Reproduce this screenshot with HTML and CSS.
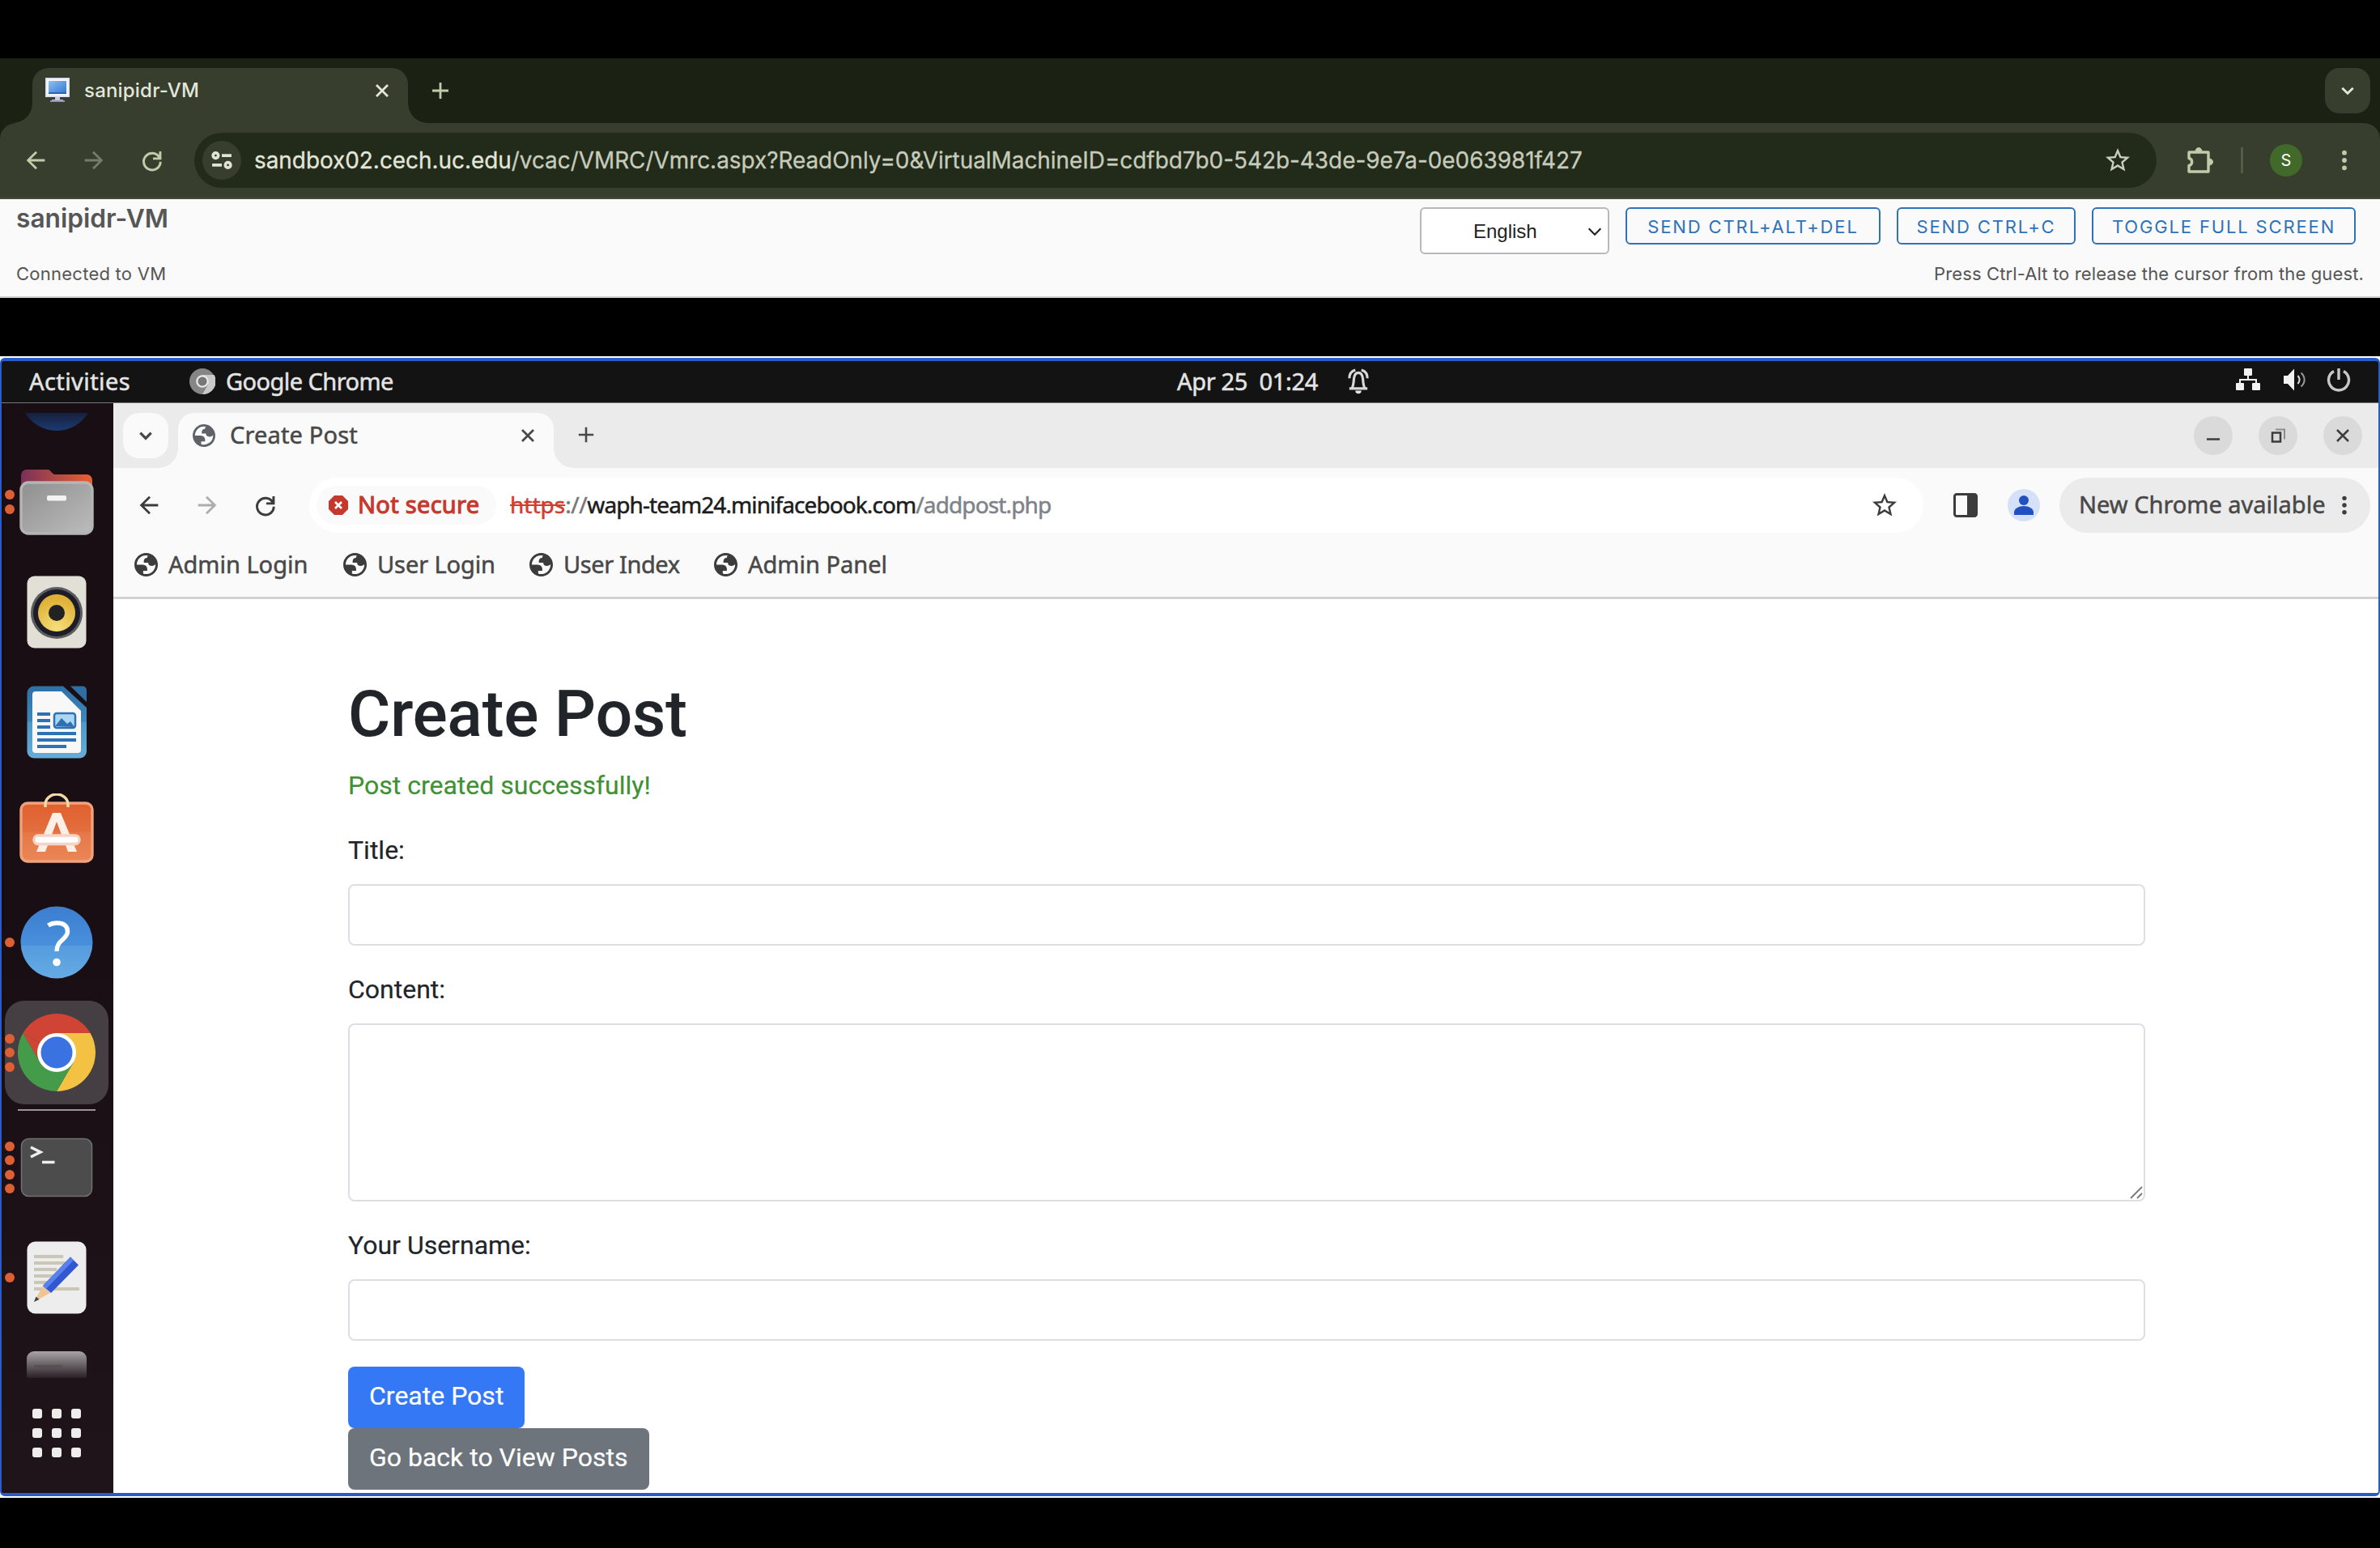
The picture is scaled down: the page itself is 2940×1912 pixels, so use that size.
FILE: index.html
```html
<!DOCTYPE html>
<html lang="en">
<head>
<meta charset="utf-8">
<title>sanipidr-VM</title>
<link rel="stylesheet" href="styles.css">
</head>
<body>
<svg class="defs" width="0" height="0">
  <symbol id="back" viewBox="0 0 24 24"><path d="M20 11H7.83l5.59-5.59L12 4l-8 8 8 8 1.41-1.41L7.83 13H20v-2z"/></symbol>
  <symbol id="forward" viewBox="0 0 24 24"><path d="M4 11h12.17l-5.59-5.59L12 4l8 8-8 8-1.41-1.41L16.17 13H4v-2z"/></symbol>
  <symbol id="reload" viewBox="0 0 24 24"><path d="M19 4.200v6.300h-6.300M18.400 9.800A7.300 7.300 0 1 0 19.200 13.200" fill="none" stroke="currentColor" stroke-width="2.100"/></symbol>
  <symbol id="close" viewBox="0 0 24 24"><path d="M5 5l14 14M19 5L5 19" fill="none" stroke="currentColor" stroke-width="2.800"/></symbol>
  <symbol id="plus" viewBox="0 0 24 24"><path d="M12 2v20M2 12h20" fill="none" stroke="currentColor" stroke-width="2.800"/></symbol>
  <symbol id="chevron" viewBox="0 0 24 24"><path d="M4 8l8 8 8-8" fill="none" stroke="currentColor"/></symbol>
  <symbol id="star" viewBox="0 0 24 24"><path d="M22 9.240l-7.190-.620L12 2 9.190 8.630 2 9.240l5.460 4.730L5.820 21 12 17.270 18.180 21l-1.630-7.030L22 9.240zM12 15.400l-3.760 2.270 1-4.280-3.320-2.880 4.380-.380L12 6.100l1.710 4.040 4.380.380-3.320 2.880 1 4.280L12 15.400z"/></symbol>
  <symbol id="dots" viewBox="0 0 24 24"><circle cx="12" cy="4" r="2.500"/><circle cx="12" cy="12" r="2.500"/><circle cx="12" cy="20" r="2.500"/></symbol>
  <symbol id="globe" viewBox="2 2 20 20"><path fill-rule="evenodd" d="M12 2c5.523 0 10 4.477 10 10s-4.477 10-10 10S2 17.523 2 12 6.477 2 12 2zM4 12h4.400c3.407.022 4.922 1.730 4.543 5.127H9.488v2.470a8.004 8.004 0 0 0 10.498-8.083C19.327 12.504 18.332 13 17 13c-2.137 0-3.206-.916-3.206-2.750h-3.748c-.274-2.728.683-4.092 2.870-4.092 0-.975.327-1.597.811-1.970A8.004 8.004 0 0 0 4 12z"/></symbol>
</svg>

<div class="browser">
<div class="tabstrip">
  <div class="tab">
    <svg class="favicon" viewBox="0 0 32 32"><defs><linearGradient id="scr" x1="0" y1="0" x2="1" y2="1"><stop offset="0" stop-color="#8fc0ee"/><stop offset="1" stop-color="#2f76d2"/></linearGradient></defs><rect x="1" y="0" width="30" height="24" fill="#d8dcea"/><rect x="2.500" y="1.500" width="27" height="21" fill="#f2f5fb"/><rect x="5" y="4" width="22" height="16" fill="url(#scr)"/><rect x="5" y="18" width="22" height="2" fill="#2c62c4"/><path d="M13 24h6v3h4v3H9v-3h4z" fill="#c9cbdc"/><rect x="7" y="28" width="18" height="2" fill="#8f90b4"/></svg>
    <span class="tab-title">sanipidr-VM</span>
    <svg class="tab-close"><use href="#close"/></svg>
  </div>
  <svg class="new-tab"><use href="#plus"/></svg>
  <div class="tab-search"><svg><use href="#chevron"/></svg></div>
</div>

<div class="toolbar">
  <svg class="nav"><use href="#back"/></svg>
  <svg class="nav dim"><use href="#forward"/></svg>
  <svg class="nav"><use href="#reload"/></svg>
  <div class="omnibox">
    <div class="site-info"><svg viewBox="0 0 24 24" fill="none" stroke="#e0e4d6" stroke-width="2.400"><circle cx="5" cy="6.500" r="3"/><path d="M12 6.500h11M1 17.500h11"/><circle cx="19" cy="17.500" r="3"/></svg></div>
    <div class="url"><span class="url-host">sandbox02.cech.uc.edu</span><span class="url-path">/vcac/VMRC/Vmrc.aspx?ReadOnly=0&amp;VirtualMachineID=cdfbd7b0-542b-43de-9e7a-0e063981f427</span></div>
    <svg class="bookmark-star"><use href="#star"/></svg>
  </div>
  <svg class="extensions" viewBox="0 0 34 34" fill="none" stroke="#c0cbaa" stroke-width="3.200" stroke-linejoin="round"><path d="M4 7h24v24H4v-7.500a4.600 4.600 0 0 0 0-9z"/><path d="M12 6a4 4.500 0 0 1 8 0zM29 15a4.500 4 0 0 1 0 8z" fill="#c0cbaa" stroke-width="1"/></svg>
  <div class="toolbar-sep"></div>
  <div class="avatar">S</div>
  <svg class="menu-dots"><use href="#dots"/></svg>
</div>
</div>

<div class="console-header">
  <div class="console-left">
    <div class="console-title">sanipidr-VM</div>
    <div class="console-status">Connected to VM</div>
  </div>
  <div class="console-right">
    <div class="console-actions">
      <div class="lang"><span>English</span><svg><use href="#chevron"/></svg></div>
      <div class="cbtn b1"><span>SEND CTRL+ALT+DEL</span></div>
      <div class="cbtn b2"><span>SEND CTRL+C</span></div>
      <div class="cbtn b3"><span>TOGGLE FULL SCREEN</span></div>
    </div>
    <div class="console-hint">Press Ctrl-Alt to release the cursor from the guest.</div>
  </div>
</div>

<div class="vm">
<div class="screen">
  <div class="topbar">
    <span class="activities">Activities</span>
    <svg class="app-icon" viewBox="0 0 32 32"><circle cx="16" cy="16" r="16" fill="#868686"/><path d="M16 8h14.500A16 16 0 0 1 16 32l7-12z" fill="#c9c9c9"/><circle cx="16" cy="16" r="7.800" fill="#e8e8e8"/><circle cx="16" cy="16" r="5.500" fill="#777"/></svg>
    <span class="app-name">Google Chrome</span>
    <span class="clock">Apr 25&nbsp; 01:24</span>
    <svg class="bell" viewBox="0 0 28 34" fill="none" stroke="#d8d8d8" stroke-width="2"><path d="M2 26.500h24M5.500 26c2-3 2-7 2.500-12 .5-5 2.500-8.500 6-8.500s5.500 3.500 6 8.500c.5 5 .5 9 2.500 12M2 13c0-5 2.500-9.500 8-11M26 13c0-5-2.500-9.500-8-11"/><path d="M10 29.500h8a4 4 0 0 1-8 0z" fill="#e6e6e6" stroke="none"/></svg>
    <div class="tray">
      <svg class="net" viewBox="0 0 32 28" fill="#f2f2f2"><rect x="11" y="0" width="10" height="9" rx="1"/><rect x="1" y="18" width="10" height="9" rx="1"/><rect x="21" y="18" width="10" height="9" rx="1"/><path d="M16 8v6M6 19v-5h20v5" fill="none" stroke="#f2f2f2" stroke-width="2"/></svg>
      <svg class="vol" viewBox="0 0 32 28"><path d="M1 9h5l8-8.500v27L6 19H1z" fill="#f2f2f2"/><path d="M18.500 9c2.500 3 2.500 7 0 10" stroke="#ddd" stroke-width="2" fill="none"/><path d="M22.500 5.500c5.500 5 5.500 12 0 17" stroke="#999" stroke-width="2" fill="none"/></svg>
      <svg class="power" viewBox="0 0 30 30" fill="none" stroke="#c8c8c8" stroke-width="2"><path d="M9 4.500A12.500 12.500 0 1 0 21 4.500M15 1v14"/></svg>
    </div>
  </div>

  <div class="desktop">
    <div class="dock">
      <div class="slot first"><svg viewBox="0 0 96 54"><defs><linearGradient id="tb" x1="0" y1="0" x2="0" y2="1"><stop offset="0" stop-color="#17203c"/><stop offset="1" stop-color="#1c3a72"/></linearGradient></defs><path d="M9 12C17 25 32 34 48 34s31-9 39-22z" fill="url(#tb)"/></svg></div>
      <div class="slot"><div class="pips"><i></i><i></i></div><svg viewBox="0 0 96 96"><defs><linearGradient id="fo" x1="0" y1="0" x2="1" y2="0"><stop offset="0" stop-color="#7b3058"/><stop offset=".5" stop-color="#b24a45"/><stop offset="1" stop-color="#e8622c"/></linearGradient><linearGradient id="fg" x1="0" y1="0" x2="1" y2="1"><stop offset="0" stop-color="#8f8f8f"/><stop offset="1" stop-color="#bcbcbc"/></linearGradient></defs><path d="M4 40V15a7 7 0 0 1 7-7h26c4 0 5 6 9 6h39a7 7 0 0 1 7 7v20z" fill="url(#fo)"/><rect x="4" y="24" width="88" height="63" rx="9" fill="url(#fg)" stroke="#b5b5b5"/><rect x="36" y="40" width="24" height="6.500" rx="2" fill="#f3f3f3"/></svg></div>
      <div class="slot"><svg viewBox="0 0 96 96"><defs><radialGradient id="ry" cx=".5" cy=".9" r=".8"><stop offset="0" stop-color="#f6de7a"/><stop offset="1" stop-color="#dfb135"/></radialGradient></defs><rect x="11.500" y="3.500" width="73" height="89" rx="9" fill="#e2dfd6"/><circle cx="48" cy="49" r="32" fill="#5c5c60"/><circle cx="48" cy="49" r="29" fill="#1d1d28"/><circle cx="48" cy="49" r="23" fill="url(#ry)"/><circle cx="48" cy="49" r="10" fill="#222"/></svg></div>
      <div class="slot"><svg viewBox="0 0 96 96"><defs><linearGradient id="wr" x1="0" y1="0" x2="0" y2="1"><stop offset="0" stop-color="#2e70a8"/><stop offset=".49" stop-color="#3d87bb"/><stop offset=".5" stop-color="#4d98c8"/><stop offset="1" stop-color="#66add8"/></linearGradient></defs><path d="M20 3.500h36L85 30v54a8.500 8.500 0 0 1-8.500 8.500H20A8.500 8.500 0 0 1 11.500 84V12A8.500 8.500 0 0 1 20 3.500z" fill="url(#wr)"/><path d="M65 3.500h15a5 5 0 0 1 5 5V23z" fill="#2f6ea4"/><path d="M22 10h32l24 24v48a4 4 0 0 1-4 4H22a4 4 0 0 1-4-4V14a4 4 0 0 1 4-4z" fill="#f8f8f8"/><path d="M24 38h16M24 46h16M24 54h16M24 62h48M24 70h48M24 78h36" stroke="#2f72b4" stroke-width="4"/><rect x="45" y="37" width="26" height="18" rx="3" fill="#acd6f2" stroke="#2f72b4" stroke-width="2.500"/><path d="M46 53l8-10 7 7 4-3 5 7z" fill="#2f72b4"/></svg></div>
      <div class="slot"><svg viewBox="0 0 96 96"><defs><linearGradient id="so" x1="0" y1="0" x2="0" y2="1"><stop offset="0" stop-color="#e0602f"/><stop offset=".49" stop-color="#e36e3e"/><stop offset=".5" stop-color="#e67848"/><stop offset="1" stop-color="#ea8656"/></linearGradient></defs><rect x="4" y="12" width="88" height="72" rx="8" fill="url(#so)" stroke="#f0a27c"/><path d="M34 17v-3a14 13 0 0 1 28 0v3" fill="none" stroke="#f2dba8" stroke-width="3.500"/><path d="M23 72L43 24h10l20 48H62L48 35 34 72z" fill="#fbefe8"/><rect x="20" y="52" width="56" height="10.500" rx="5" fill="#fff" stroke="#f5d3c5"/></svg></div>
      <div class="slot"><div class="pips"><i></i></div><svg viewBox="0 0 96 96"><defs><linearGradient id="he" x1="0" y1="0" x2="0" y2="1"><stop offset="0" stop-color="#3c7dd0"/><stop offset=".54" stop-color="#4890dc"/><stop offset=".55" stop-color="#569cde"/><stop offset="1" stop-color="#64abe4"/></linearGradient></defs><circle cx="48" cy="48" r="44.500" fill="url(#he)"/><path d="M37.500 27c4-2.500 8-3 11-3 8 0 13 3.500 13 10.500 0 10-13.500 10-13.500 24.500" fill="none" stroke="#fff" stroke-width="5.500"/><circle cx="48" cy="72.500" r="4.800" fill="#fff"/></svg></div>
      <div class="slot active"><div class="pips"><i></i><i></i><i></i></div><svg viewBox="0 0 96 96"><path d="M48 48L6.430 24A48 48 0 0 1 89.570 24L48 24z" fill="#d04436"/><path d="M6.430 24L27.200 60 48 48z" fill="#d04436"/><path d="M89.570 24A48 48 0 0 1 48 96L68.800 60 48 24z" fill="#f3c243"/><path d="M6.430 24A48 48 0 0 0 48 96L68.800 60H27.200z" fill="#449c4b"/><circle cx="48" cy="48" r="24" fill="#fff"/><circle cx="48" cy="48" r="19.500" fill="#3a72e2"/></svg></div>
      <div class="dock-sep"></div>
      <div class="slot"><div class="pips"><i></i><i></i><i></i><i></i></div><svg viewBox="0 0 96 96"><rect x="4.500" y="12.500" width="87" height="71" rx="9" fill="#4c4c4c" stroke="#707070" stroke-width="1.500"/><path d="M16 23l12 6-12 6" fill="none" stroke="#eee" stroke-width="3.500"/><path d="M30 41.500h15.500" stroke="#eee" stroke-width="3.500"/></svg></div>
      <div class="slot"><div class="pips"><i></i></div><svg viewBox="0 0 96 96"><rect x="11.500" y="3.500" width="73" height="89" rx="10" fill="#ededed"/><path d="M20 22h36M20 30h48M20 38h28M20 46h26M20 54h20M20 62h56" stroke="#c9c7b8" stroke-width="4"/><path d="M31 58l9 9-20 11z" fill="#f0c596"/><path d="M20 78l2.500-6.500 4 3.500z" fill="#444"/><path d="M31 58L65 22.500l10 10L41 67z" fill="#3158d0"/><path d="M31 58L65 22.500l4 4L35 62z" fill="#5a82ee"/></svg></div>
      <div class="slot last"><svg viewBox="0 0 96 56"><defs><linearGradient id="fa" x1="0" y1="0" x2="0" y2="1"><stop offset="0" stop-color="#a8a4a6"/><stop offset="1" stop-color="#2a2025"/></linearGradient></defs><path d="M11 56V32a9 9 0 0 1 9-9h56a9 9 0 0 1 9 9v24z" fill="url(#fa)"/><path d="M20 42h35" stroke="#555052" stroke-width="4"/></svg></div>
      <div class="app-grid"><i></i><i></i><i></i><i></i><i></i><i></i><i></i><i></i><i></i></div>
    </div>

    <div class="guest">
      <div class="g-strip">
        <div class="g-search"><svg><use href="#chevron"/></svg></div>
        <div class="g-tab">
          <svg class="g-globe"><use href="#globe"/></svg>
          <span class="g-tab-title">Create Post</span>
          <svg class="g-close"><use href="#close"/></svg>
        </div>
        <svg class="g-plus"><use href="#plus"/></svg>
        <div class="win">
          <div><svg viewBox="0 0 20 20"><path d="M2 14.500h16"/></svg></div>
          <div><svg viewBox="0 0 20 20"><path d="M3 6.500h10v11H3z"/><path d="M7 2.500h11v12" stroke="#8d8d8d" stroke-width="2"/></svg></div>
          <div><svg viewBox="0 0 20 20"><path d="M3 3l14 14M17 3L3 17"/></svg></div>
        </div>
      </div>
      <div class="g-bar">
        <svg class="nav"><use href="#back"/></svg>
        <svg class="nav dim"><use href="#forward"/></svg>
        <svg class="nav"><use href="#reload"/></svg>
        <div class="g-omni">
          <div class="chip"><svg viewBox="0 0 24 24"><path d="M7 0h10l7 7v10l-7 7H7l-7-7V7z" fill="#c5392c"/><path d="M8 8l8 8M16 8l-8 8" stroke="#fff" stroke-width="2.600"/></svg><span>Not secure</span></div>
          <div class="g-url"><span class="scheme">https</span><span class="sep">://</span><span class="host">waph-team24.minifacebook.com</span><span class="path">/addpost.php</span></div>
          <svg class="g-star"><use href="#star"/></svg>
        </div>
        <svg class="panel" viewBox="0 0 30 30"><path d="M4 1.500h22a2.500 2.500 0 0 1 2.500 2.500v22a2.500 2.500 0 0 1-2.500 2.500H4A2.500 2.500 0 0 1 1.500 26V4A2.500 2.500 0 0 1 4 1.500z" fill="none" stroke="#3c3c3c" stroke-width="3"/><path d="M17 1h11v28H17z" fill="#3c3c3c"/></svg>
        <svg class="person" viewBox="0 0 40 40"><circle cx="20" cy="20" r="20" fill="#d5e1f8"/><circle cx="20" cy="14" r="6" fill="#2150c0"/><path d="M8 32v-3c0-5 6-8 12-8s12 3 12 8v3z" fill="#2150c0"/></svg>
        <div class="update"><span>New Chrome available</span><svg><use href="#dots"/></svg></div>
      </div>
      <div class="marks">
        <div class="mark m1"><svg><use href="#globe"/></svg><span>Admin Login</span></div>
        <div class="mark m2"><svg><use href="#globe"/></svg><span>User Login</span></div>
        <div class="mark m3"><svg><use href="#globe"/></svg><span>User Index</span></div>
        <div class="mark m4"><svg><use href="#globe"/></svg><span>Admin Panel</span></div>
      </div>
      <div class="page">
        <h1>Create Post</h1>
        <p class="success">Post created successfully!</p>
        <form>
          <label>Title:</label>
          <input type="text" class="control">
          <label>Content:</label>
          <div class="area"><textarea class="control"></textarea><svg class="grip" viewBox="0 0 16 16"><path d="M1 15L15 1M9 15l6-6" stroke="#777" stroke-width="1.800"/></svg></div>
          <label>Your Username:</label>
          <input type="text" class="control">
          <button type="button" class="btn primary">Create Post</button>
          <a class="btn secondary">Go back to View Posts</a>
        </form>
      </div>
    </div>
  </div>
</div>
</div>
</body>
</html>
```
FILE: styles.css
```css
* { box-sizing: border-box; }
body { margin: 0; width: 2940px; height: 1912px; background: #000; overflow: hidden; padding-top: 72px; font-family: Inter, sans-serif; }
svg { display: block; flex: none; stroke-width: 3.4; }
span { white-space: nowrap; }
.defs { position: absolute; }

/* host browser */
.browser { background: #1c2213; }
.tabstrip { height: 80px; display: flex; align-items: flex-start; padding: 12px 12px 0 40px; }
.tab { position: relative; width: 464px; height: 68px; background: #373e2d; border-radius: 20px 20px 0 0; display: flex; align-items: center; padding: 0 20px 12px 15px; color: #e3e6da; }
.tab::before, .tab::after { content: ""; position: absolute; bottom: 0; width: 24px; height: 24px; }
.tab::before { left: -24px; background: radial-gradient(circle at 0 0, transparent 23.5px, #373e2d 24px); }
.tab::after { right: -24px; background: radial-gradient(circle at 100% 0, transparent 23.5px, #373e2d 24px); }
.favicon { width: 32px; height: 32px; }
.tab-title { margin-left: 17px; margin-bottom: 2px; font-size: 24px; font-weight: 500; letter-spacing: .2px; }
.tab-close { width: 24px; height: 24px; margin-left: auto; }
.new-tab { width: 24px; height: 24px; margin: 16px 0 0 28px; color: #c0cbaa; }
.tab-search { width: 56px; height: 56px; margin-left: auto; border-radius: 18px; background: #373e2d; display: flex; align-items: center; justify-content: center; color: #e3e6da; }
.tab-search svg { width: 20px; height: 20px; }
.toolbar { height: 94px; background: #373e2d; border-bottom: 2px solid #464a3e; border-radius: 20px 20px 0 0; display: flex; align-items: center; padding: 0 24px 0 27px; color: #c0cbaa; fill: #c0cbaa; }
.nav { width: 34px; height: 34px; margin-right: 38px; }
.toolbar .dim { fill: #757d68; }
.omnibox { width: 2424px; height: 68px; border-radius: 34px; background: #222a19; margin-left: -3px; display: flex; align-items: center; padding: 0 30px 0 10px; }
.site-info { width: 48px; height: 48px; border-radius: 50%; background: #373e2d; display: flex; align-items: center; justify-content: center; }
.site-info svg { width: 26px; height: 26px; }
.url { margin-left: 16px; font-size: 27.88px; display: flex; color: #c6cbbb; -webkit-text-stroke: .3px; }
.url-host { color: #e3e6da; }
.bookmark-star { width: 36px; height: 36px; margin-left: auto; fill: #c9cdbf; }
.extensions { width: 34px; height: 34px; margin-left: 36px; }
.toolbar-sep { width: 3px; height: 32px; background: #535c46; margin-left: 34px; }
.avatar { width: 40px; height: 40px; border-radius: 50%; background: #41692a; color: #fff; font-size: 20px; display: flex; align-items: center; justify-content: center; margin-left: 33px; }
.menu-dots { width: 28px; height: 28px; margin-left: 38px; }

/* console header */
.console-header { height: 122px; background: #fafafa; border-bottom: 2px solid #ccc; display: flex; justify-content: space-between; color: #565656; padding: 0 20px; }
.console-title { font-size: 31.7px; font-weight: 600; line-height: 40px; padding-top: 4px; }
.console-status { font-size: 22px; line-height: 28px; margin-top: 34px; letter-spacing: .25px; }
.console-right { display: flex; flex-direction: column; }
.console-actions { display: flex; gap: 20px; padding-top: 10px; height: 68px; align-items: flex-start; margin-right: 10px; justify-content: flex-end; }
.lang { width: 234px; height: 58px; border: 2px solid #b8b8b8; border-radius: 6px; background: #fff; color: #222; font: 24px "Liberation Sans", sans-serif; display: flex; align-items: center; justify-content: space-between; padding: 2px 5px 0 64px; }
.lang svg { width: 22px; height: 22px; stroke-width: 2.3; }
.cbtn { height: 46px; border: 2px solid #3072b8; border-radius: 6px; color: #3072b8; font-size: 22px; display: flex; align-items: center; justify-content: center; padding-top: 2px; letter-spacing: 1.85px; }
.b1 { width: 315px; }
.b2 { width: 221px; }
.b3 { width: 326px; }
.console-hint { font-size: 22px; line-height: 28px; margin-top: 10px; text-align: right; white-space: nowrap; letter-spacing: .13px; }

/* guest screen */
.vm { height: 1410px; margin-top: 72px; background: #fff; padding: 2px 0; }
.screen { height: 1406px; border: solid #2a5cc8; border-width: 4px 2px; border-radius: 6px; overflow: hidden; background: #131313; font-family: "Noto Sans", sans-serif; font-size: 29px; -webkit-text-stroke: .5px; }
.topbar { height: 52px; display: flex; align-items: center; color: #e4e4e4; padding: 0 34px 2px; border-bottom: 1px solid #777; }
.activities { letter-spacing: .42px; width: 125px; }
.app-icon { width: 32px; height: 32px; margin-left: 73px; }
.app-name { margin-left: 13px; width: 207px; letter-spacing: -.55px; }
.clock { margin-left: 968px; width: 174px; letter-spacing: -.33px; }
.bell { width: 26px; height: 32px; margin-left: 37px; }
.tray { margin-left: auto; display: flex; align-items: center; margin-bottom: 3px; }
.net, .vol { width: 32px; height: 28px; }
.vol { margin: 0 22px 0 27px; }
.power { width: 30px; height: 30px; }
.desktop { display: flex; height: 1346px; }
.dock { width: 138px; background: linear-gradient(#190e14 50%, #20141b); }
.slot { position: relative; height: 136px; display: flex; align-items: center; justify-content: center; padding-right: 2px; }
.slot svg { width: 96px; height: 96px; position: relative; }
.slot.first { height: 54px; }
.slot.first svg { height: 54px; }
.slot.last { height: 56px; }
.slot.last svg { height: 56px; }
.slot.active::before { content: ""; position: absolute; left: 4px; top: 4px; width: 128px; height: 128px; border-radius: 24px; background: #453e42; }
.pips { position: absolute; z-index: 1; left: 4px; top: 0; height: 136px; display: flex; flex-direction: column; gap: 5.5px; justify-content: center; }
.pips i { width: 12px; height: 12px; border-radius: 50%; background: #dd6035; }
.dock-sep { height: 2px; margin: 2px 22px 2px 20px; background: #98949a; }
.app-grid { display: grid; grid-template-columns: repeat(3, 12px); gap: 12px; justify-content: center; padding: 38px 2px 0 0; }
.app-grid i { height: 12px; border-radius: 3px; background: #efedeb; }

.guest { flex: 1; background: #fafafa; display: flex; flex-direction: column; color: #484848; }
.guest span { margin-bottom: 3px; }
.g-strip { height: 80px; background: #ebebeb; display: flex; padding: 12px 20px 0 12px; }
.g-search { width: 56px; height: 56px; border-radius: 20px; background: #fafafa; display: flex; align-items: center; justify-content: center; }
.g-search svg { width: 20px; height: 20px; stroke-width: 4; }
.g-tab { position: relative; width: 464px; height: 68px; margin-left: 12px; border-radius: 20px 20px 0 0; background: #fafafa; display: flex; align-items: center; padding: 0 20px 12px 18px; }
.g-tab::before, .g-tab::after { content: ""; position: absolute; bottom: 0; width: 24px; height: 24px; }
.g-tab::before { left: -24px; background: radial-gradient(circle at 0 0, transparent 23.5px, #fafafa 24px); }
.g-tab::after { right: -24px; background: radial-gradient(circle at 100% 0, transparent 23.5px, #fafafa 24px); }
.g-globe { width: 28px; height: 28px; fill: #5f6368; }
.g-tab-title { margin-left: 18px; letter-spacing: .15px; }
.g-close { width: 24px; height: 24px; margin-left: auto; }
.g-plus { width: 22px; height: 22px; margin: 16px 0 0 29px; }
.win { margin-left: auto; display: flex; gap: 32px; padding-top: 4px; }
.win div { width: 48px; height: 48px; border-radius: 50%; background: #dadada; display: flex; align-items: center; justify-content: center; }
.win svg { width: 20px; height: 20px; fill: none; stroke: #3d3d3d; stroke-width: 2.5; }
.g-bar { height: 92px; display: flex; align-items: center; padding: 0 10px 0 27px; color: #3c3c3c; fill: #3c3c3c; }
.g-bar .dim { fill: #adadad; }
.g-omni { width: 1994px; height: 68px; border-radius: 34px; background: #fff; margin-left: -1px; display: flex; align-items: center; padding: 0 30px 0 9px; }
.chip { width: 222px; height: 48px; border-radius: 24px; background: #fafafa; display: flex; align-items: center; padding-left: 15px; color: #c5392c; -webkit-text-stroke: 1.1px; letter-spacing: .3px; }
.chip svg { width: 24px; height: 24px; margin-right: 12px; }
.g-url { margin-left: 17px; display: flex; font-size: 28px; }
.scheme { color: #d33c30; text-decoration: line-through; }
.sep { color: #777; letter-spacing: -.4px; }
.host { color: #1c1c1c; letter-spacing: -.9px; }
.path { color: #80828a; letter-spacing: -.88px; }
.g-star { width: 36px; height: 36px; margin-left: auto; }
.panel { width: 30px; height: 30px; margin-left: 37px; }
.person { width: 40px; height: 40px; margin-left: 37px; }
.update { width: 384px; height: 68px; border-radius: 34px; background: #ebebeb; margin-left: 24px; display: flex; align-items: center; padding: 0 19px 0 24px; justify-content: space-between; color: #484848; }
.update svg { width: 26px; height: 26px; }
.marks { height: 70px; border-bottom: 3px solid #d2d2d2; display: flex; align-items: flex-start; padding: 7px 0 0 26px; }
.mark { display: flex; align-items: center; height: 42px; fill: #3c3c3c; }
.mark svg { width: 29px; height: 29px; margin: 0 13px 2px 0; }
.m1 { width: 258px; }
.m2 { width: 230px; letter-spacing: -.1px; }
.m3 { width: 228px; letter-spacing: -.4px; }

/* page */
.page { flex: 1; background: #fff; padding: 94px 288px 0 290px; font-family: Roboto, sans-serif; color: #212529; font-size: 32px; line-height: 48px; -webkit-text-stroke: .2px; }
h1 { margin: 0 0 16px; font-size: 80px; font-weight: 500; line-height: 96px; }
.success { margin: 0 0 32px; color: #3f9134; }
form { display: flex; flex-direction: column; align-items: flex-start; }
label { margin-bottom: 18px; }
.control { display: block; width: 100%; height: 76px; border: 2px solid #dcdfe3; border-radius: 8px; background: #fff; margin: 0 0 30px; resize: none; outline: none; }
.area { width: 100%; position: relative; }
textarea.control { height: 220px; }
.grip { position: absolute; right: 3px; bottom: 33px; width: 16px; height: 16px; }
.btn { display: block; height: 76px; border: 0; border-radius: 8px; padding: 12px 26px 16px; font: 32px/48px Roboto, sans-serif; color: #fff; white-space: nowrap; }
.primary { background: #3578f6; width: 218px; margin-top: 2px; }
.secondary { background: #6d747c; width: 372px; }
```
